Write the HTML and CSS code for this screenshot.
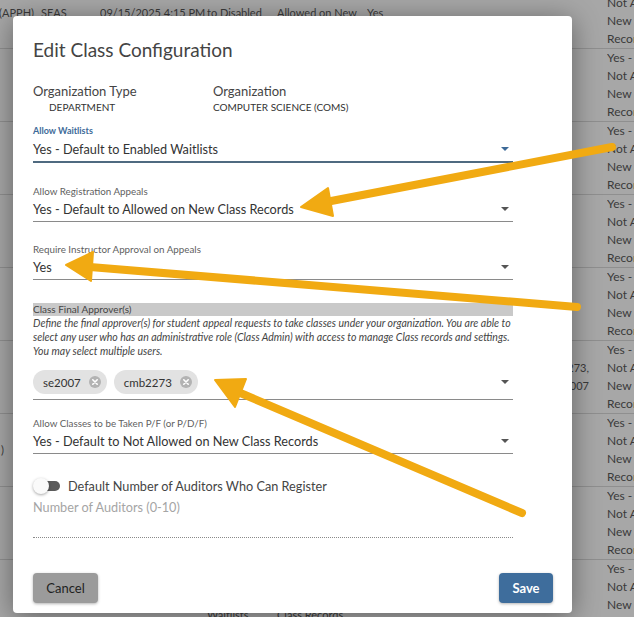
FILE: index.html
```html
<!DOCTYPE html>
<html lang="en">

<head>
    <meta charset="UTF-8">
    <meta name="viewport" content="width=device-width, initial-scale=1.0">
    <title>Edit Class Configuration</title>
    <link rel="stylesheet" href="styles.css">
</head>

<body>

    <!-- Class records table behind the dialog -->
    <div class="records">
        <div class="record-row">
            <div class="cell cell-org first-line"><span>(APPH)</span></div>
            <div class="cell first-line">SEAS</div>
            <div class="cell first-line">09/15/2025 4:15 PM</div>
            <div class="cell first-line">to Disabled</div>
            <div class="cell first-line">Allowed on New</div>
            <div class="cell first-line">Yes</div>
            <div class="cell cell-pf">Yes - Default to Not Allowed on New Class Records</div>
        </div>
        <div class="record-row">
            <div class="cell cell-org"></div>
            <div class="cell"></div><div class="cell"></div><div class="cell"></div><div class="cell"></div><div class="cell"></div>
            <div class="cell cell-pf">Yes - Default to Not Allowed on New Class Records</div>
        </div>
        <div class="record-row">
            <div class="cell cell-org"></div>
            <div class="cell"></div><div class="cell"></div><div class="cell"></div><div class="cell"></div><div class="cell"></div>
            <div class="cell cell-pf">Yes - Default to Not Allowed on New Class Records</div>
        </div>
        <div class="record-row">
            <div class="cell cell-org"></div>
            <div class="cell"></div><div class="cell"></div><div class="cell"></div><div class="cell"></div><div class="cell"></div>
            <div class="cell cell-pf">Yes - Default to Not Allowed on New Class Records</div>
        </div>
        <div class="record-row">
            <div class="cell cell-org"></div>
            <div class="cell"></div><div class="cell"></div><div class="cell"></div><div class="cell"></div><div class="cell"></div>
            <div class="cell cell-pf">Yes - Default to Not Allowed on New Class Records</div>
        </div>
        <div class="record-row">
            <div class="cell cell-org"></div>
            <div class="cell"></div><div class="cell"></div><div class="cell"></div><div class="cell"></div>
            <div class="cell cell-approvers">cmb2273,<br>se2007</div>
            <div class="cell cell-pf">Yes - Default to Not Allowed on New Class Records</div>
        </div>
        <div class="record-row">
            <div class="cell cell-org"><span class="cut-off">)</span></div>
            <div class="cell"></div><div class="cell"></div><div class="cell"></div><div class="cell"></div><div class="cell"></div>
            <div class="cell cell-pf">Yes - Default to Not Allowed on New Class Records</div>
        </div>
        <div class="record-row">
            <div class="cell cell-org"></div>
            <div class="cell"></div><div class="cell"></div><div class="cell"></div><div class="cell"></div><div class="cell"></div>
            <div class="cell cell-pf">Yes - Default to Not Allowed on New Class Records</div>
        </div>
        <div class="record-row">
            <div class="cell cell-org"></div>
            <div class="cell"></div><div class="cell"></div>
            <div class="cell last-line">Waitlists</div>
            <div class="cell last-line">Class Records</div>
            <div class="cell"></div>
            <div class="cell cell-pf">Yes - Default to Not Allowed on New Class Records</div>
        </div>
    </div>

    <!-- Edit dialog -->
    <div class="modal">
        <h2 class="modal-title">Edit Class Configuration</h2>

        <div class="org-info">
            <div class="org-item">
                <div class="org-label">Organization Type</div>
                <div class="org-value indent">Department</div>
            </div>
            <div class="org-item">
                <div class="org-label">Organization</div>
                <div class="org-value">Computer Science (COMS)</div>
            </div>
        </div>

        <div class="field field-waitlists active">
            <div class="field-label">Allow Waitlists</div>
            <div class="select">
                <span>Yes - Default to Enabled Waitlists</span>
                <span class="caret"></span>
            </div>
        </div>

        <div class="field field-appeals">
            <div class="field-label">Allow Registration Appeals</div>
            <div class="select">
                <span>Yes - Default to Allowed on New Class Records</span>
                <span class="caret"></span>
            </div>
        </div>

        <div class="field field-instructor">
            <div class="field-label">Require Instructor Approval on Appeals</div>
            <div class="select">
                <span>Yes</span>
                <span class="caret"></span>
            </div>
        </div>

        <div class="field field-approvers">
            <div class="section-label">Class Final Approver(s)</div>
            <p class="help-text">Define the final approver(s) for student appeal requests to take classes under your organization. You are able to select any user who has an administrative role (Class Admin) with access to manage Class records and settings. You may select multiple users.</p>
            <div class="select select-multi">
                <div class="chips">
                    <span class="chip">se2007
                        <svg class="chip-remove" viewBox="0 0 12 12" width="12" height="12">
                            <circle cx="6" cy="6" r="6" fill="#b3b3b3"/>
                            <path d="M3.8 3.8 L8.2 8.2 M8.2 3.8 L3.8 8.2" stroke="#fff" stroke-width="1.6" stroke-linecap="round"/>
                        </svg>
                    </span>
                    <span class="chip">cmb2273
                        <svg class="chip-remove" viewBox="0 0 12 12" width="12" height="12">
                            <circle cx="6" cy="6" r="6" fill="#b3b3b3"/>
                            <path d="M3.8 3.8 L8.2 8.2 M8.2 3.8 L3.8 8.2" stroke="#fff" stroke-width="1.6" stroke-linecap="round"/>
                        </svg>
                    </span>
                </div>
                <span class="caret"></span>
            </div>
        </div>

        <div class="field field-pf">
            <div class="field-label">Allow Classes to be Taken P/F (or P/D/F)</div>
            <div class="select">
                <span>Yes - Default to Not Allowed on New Class Records</span>
                <span class="caret"></span>
            </div>
        </div>

        <div class="toggle-row">
            <span class="switch"><span class="switch-knob"></span></span>
            <span>Default Number of Auditors Who Can Register</span>
        </div>
        <div class="auditors">
            <div class="placeholder">Number of Auditors (0-10)</div>
            <div class="auditors-input"></div>
        </div>

        <div class="modal-footer">
            <button class="btn btn-cancel">Cancel</button>
            <button class="btn btn-save">Save</button>
        </div>
    </div>

    <!-- Highlight arrows -->
    <svg class="callouts" width="634" height="617" viewBox="0 0 634 617">
        <g fill="#f1aa12" stroke="#f1aa12" stroke-linecap="round">
            <line x1="612" y1="147" x2="326" y2="202" stroke-width="8"/>
            <polygon points="301,207 328,188 333,216" stroke-width="2" stroke-linejoin="round"/>

            <line x1="577" y1="307" x2="90" y2="267" stroke-width="8"/>
            <polygon points="66,265 93,252 91,281" stroke-width="2" stroke-linejoin="round"/>

            <line x1="522" y1="513" x2="238" y2="392" stroke-width="8"/>
            <polygon points="215,380 246,379 235,407" stroke-width="2" stroke-linejoin="round"/>
        </g>
    </svg>

</body>

</html>
```

FILE: styles.css
```css
html,
body {
    margin: 0;
    padding: 0;
    width: 634px;
    height: 617px;
    overflow: hidden;
}

body {
    position: relative;
    font-family: Lato, "Liberation Sans", sans-serif;
    background-color: #a7a7a7;
}

/* Table rows under the overlay */
.records {
    margin-top: -24px;
    font-size: 12px;
    line-height: 18px;
    color: #3a3a3a;
}

.record-row {
    display: grid;
    grid-template-columns: 41px 59px 107px 70px 90px 240px 95px;
    height: 72px;
    border-bottom: 1px solid #8f8f8f;
    width: 702px;
}

.cell {
    overflow: hidden;
    white-space: nowrap;
    font-size: 11px;
}

.cell-org {
    display: flex;
    justify-content: flex-end;
    align-items: flex-start;
    padding-right: 7px;
}

.cell-pf {
    white-space: normal;
    font-size: 12px;
}

.first-line {
    padding-top: 28px;
}

.last-line {
    padding-top: 46px;
}

.cell-approvers {
    text-align: right;
    padding-right: 18px;
    padding-top: 18px;
}

.cut-off {
    margin-right: auto;
    margin-left: 1px;
    padding-top: 27px;
}

/* Dialog */
.modal {
    position: absolute;
    left: 13px;
    top: 16px;
    width: 559px;
    height: 597px;
    box-sizing: border-box;
    padding: 22px 19px 10px 20px;
    display: flex;
    flex-direction: column;
    background-color: #ffffff;
    border-radius: 4px;
    box-shadow: 0 4px 28px rgba(0, 0, 0, 0.42);
    color: #333;
}

.modal-title {
    margin: 0;
    font-size: 19px;
    font-weight: 400;
    line-height: 24px;
    color: #444;
}

.org-info {
    display: flex;
    margin-top: 21px;
}

.org-item:first-child {
    width: 180px;
}

.org-label {
    font-size: 13px;
    line-height: 16px;
    color: #444;
}

.org-value {
    margin-top: 1px;
    font-size: 10px;
    line-height: 14px;
    text-transform: uppercase;
    color: #333;
}

.org-value.indent {
    padding-left: 16px;
}

.field {
    width: 480px;
}

.field-waitlists {
    margin-top: 11px;
}

.field-appeals {
    margin-top: 22px;
}

.field-instructor {
    margin-top: 21px;
}

.field-approvers {
    margin-top: 23px;
}

.field-pf {
    margin-top: 17px;
}

.field-label {
    font-size: 9.8px;
    line-height: 12px;
    color: #5f5f5f;
}

.active .field-label {
    color: #3d6a98;
    font-size: 9px;
    font-weight: 700;
}

.select {
    display: flex;
    align-items: center;
    justify-content: space-between;
    height: 24px;
    padding-right: 4px;
    border-bottom: 1px solid #8a8a8a;
    font-size: 12.7px;
    color: #333;
}

.active .select {
    border-bottom: 2px solid #4f6a80;
}

.caret {
    width: 0;
    height: 0;
    border-left: 4px solid transparent;
    border-right: 4px solid transparent;
    border-top: 4px solid #555;
}

.active .caret {
    border-top-color: #3d6a98;
}

.section-label {
    background-color: #c9c9c9;
    font-size: 10px;
    line-height: 13px;
    color: #444;
}

.help-text {
    margin: 0;
    font-size: 10.5px;
    font-style: italic;
    line-height: 14px;
    color: #444;
}

.select-multi {
    height: auto;
    padding-top: 12px;
    padding-bottom: 5px;
}

.chips {
    display: flex;
    gap: 7px;
}

.chip {
    display: inline-flex;
    align-items: center;
    gap: 8px;
    height: 24px;
    padding: 0 6px 0 10px;
    border-radius: 12px;
    background-color: #e2e2e2;
    font-size: 11.5px;
    color: #333;
}

.toggle-row {
    display: flex;
    align-items: center;
    gap: 8px;
    margin-top: 22px;
    height: 20px;
    font-size: 12.7px;
    color: #444;
}

.switch {
    position: relative;
    width: 27px;
    height: 16px;
}

.switch::before {
    content: "";
    position: absolute;
    left: 3px;
    top: 3px;
    width: 24px;
    height: 10px;
    border-radius: 5px;
    background-color: #5b5b5b;
}

.switch-knob {
    position: absolute;
    left: 0;
    top: 0;
    width: 16px;
    height: 16px;
    border-radius: 50%;
    background-color: #fafafa;
    box-shadow: 0 1px 3px rgba(0, 0, 0, 0.35);
}

.auditors {
    width: 480px;
    margin-top: 2px;
}

.placeholder {
    font-size: 12.7px;
    line-height: 18px;
    color: #a5a5a5;
}

.auditors-input {
    height: 21px;
    border-bottom: 1px dotted #8a8a8a;
}

.modal-footer {
    display: flex;
    justify-content: space-between;
    margin-top: auto;
}

.btn {
    height: 30px;
    border: none;
    border-radius: 4px;
    font-family: inherit;
    font-size: 13px;
    cursor: pointer;
    box-shadow: 0 1px 3px rgba(0, 0, 0, 0.3);
}

.btn-cancel {
    width: 65px;
    background-color: #9b9b9b;
    color: #1f1f1f;
}

.btn-save {
    width: 54px;
    background-color: #3e6d9c;
    color: #ffffff;
    font-weight: 700;
}

.callouts {
    position: absolute;
    left: 0;
    top: 0;
    pointer-events: none;
}
```
